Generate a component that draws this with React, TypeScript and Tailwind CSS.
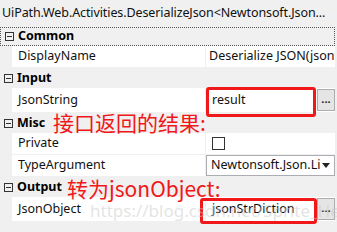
import React from "react";

const font = { fontFamily: '"Noto Sans", "Noto Sans CJK SC", sans-serif' };

function Toggle() {
  return (
    <div className="w-[12px] flex justify-center">
      <div className="w-[9px] h-[9px] border border-[#333] flex items-center justify-center">
        <div className="w-[5px] h-px bg-[#333]" />
      </div>
    </div>
  );
}

function Header({ label, h, focus }: { label: string; h: string; focus?: boolean }) {
  return (
    <div
      className={`flex items-center ${h} ${focus ? "border border-dotted border-[#555] mr-[2px]" : ""}`}
    >
      <div className="ml-[2px]">
        <Toggle />
      </div>
      <span className="ml-[3px] font-bold text-[12.5px] text-black">{label}</span>
    </div>
  );
}

function Row({ label, h, children }: { label: string; h: string; children?: React.ReactNode }) {
  return (
    <div className={`flex ${h} ml-[12px] mr-[2px] border-b border-[#f0f0f0] bg-white`}>
      <div className="w-[193px] flex items-center pl-[6px] text-[12.5px] text-[#111]">{label}</div>
      <div className="w-px bg-[#f0f0f0]" />
      <div className="flex-1 flex items-center min-w-0">{children}</div>
    </div>
  );
}

export default function App() {
  return (
    <div className="relative w-[337px] h-[232px] bg-[#f0f0f0] overflow-hidden" style={font}>
      <div className="h-[27px] flex items-center pl-[2px] text-[12.5px] tracking-[-0.1px] text-[#111] whitespace-nowrap">
        UiPath.Web.Activities.DeserializeJson&lt;Newtonsoft.Json...
      </div>
      <Header label="Common" h="h-[19px]" focus />
      <Row label="DisplayName" h="h-[22px]">
        <span className="pl-[3px] text-[12.5px] text-[#111] whitespace-nowrap overflow-hidden">
          Deserialize JSON(json
        </span>
      </Row>
      <Header label="Input" h="h-[20px]" />
      <Row label="JsonString" h="h-[25px]">
        <div className="flex-1 h-full flex items-center pl-[6px] text-[12.5px] text-[#111]">result</div>
        <div className="w-[18px] h-[22px] bg-[#e5e5e5] border border-[#adadad] flex items-center justify-center text-[11px] font-bold text-[#222] leading-none pb-[3px]">
          ...
        </div>
      </Row>
      <Header label="Misc" h="h-[20px]" />
      <Row label="Private" h="h-[22px]">
        <div className="ml-[6px] w-[13px] h-[13px] border border-[#333] bg-white" />
      </Row>
      <Row label="TypeArgument" h="h-[22px]">
        <div className="flex-1 h-[21px] border border-[#abadb3] flex items-center justify-between pl-[4px] pr-[4px] bg-white">
          <span className="text-[12.5px] text-[#111] whitespace-nowrap overflow-hidden">Newtonsoft.Json.Li</span>
          <svg width="8" height="5" viewBox="0 0 8 5">
            <path d="M0 0 L8 0 L4 5 Z" fill="#222" />
          </svg>
        </div>
      </Row>
      <Header label="Output" h="h-[20px]" />
      <Row label="JsonObject" h="h-[25px]">
        <div className="flex-1 h-full flex items-center pl-[6px] text-[12.5px] text-[#111]">jsonStrDiction</div>
        <div className="w-[18px] h-[22px] bg-[#e5e5e5] border border-[#adadad] flex items-center justify-center text-[11px] font-bold text-[#222] leading-none pb-[3px]">
          ...
        </div>
      </Row>

      {/* red annotations */}
      <div className="absolute left-[206px] top-[87px] w-[110px] h-[30px] border-[3px] border-[#f01818] rounded-[3px]" />
      <div className="absolute left-[200px] top-[198px] w-[117px] h-[26px] border-[3px] border-[#f01818] rounded-[3px]" />
      <div
        className="absolute left-[53px] top-[108px] text-[21px] leading-[28px] text-[#f01818] whitespace-nowrap"
        style={{ fontFamily: '"Noto Sans CJK SC", sans-serif' }}
      >
        接口返回的结果:
      </div>
      <div
        className="absolute left-[67px] top-[174px] text-[21px] leading-[28px] text-[#f01818] whitespace-nowrap"
        style={{ fontFamily: '"Noto Sans CJK SC", "Noto Sans", sans-serif' }}
      >
        转为jsonObject:
      </div>
      <div className="absolute left-[90px] top-[199px] text-[17px] leading-[24px] text-[#c8c8c8]/50 whitespace-nowrap pointer-events-none">
        https://blog.csdn.net/Sprite_Henry
      </div>
    </div>
  );
}
